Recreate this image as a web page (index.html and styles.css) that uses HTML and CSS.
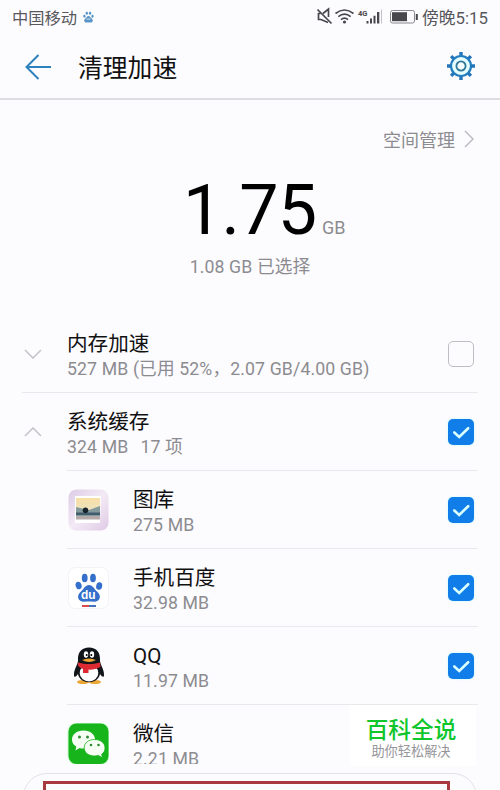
FILE: index.html
```html
<!DOCTYPE html>
<html lang="zh-CN">
<head>
<meta charset="utf-8">
<title>清理加速</title>
<link rel="stylesheet" href="styles.css">
</head>
<body>
<svg class="defs" width="0" height="0">
  <symbol id="check" viewBox="0 0 26 26"><path d="M6.3 13.500 11.200 18 20.200 9.200" fill="none" stroke="#d9ffff" stroke-width="2.600" stroke-linecap="round"/></symbol>
  <symbol id="paw" viewBox="0 0 28 30"><g fill="currentColor"><ellipse cx="9.700" cy="5" rx="2.900" ry="4.300"/><ellipse cx="18" cy="5" rx="2.900" ry="4.300"/><ellipse cx="3.600" cy="12.500" rx="3" ry="3.800" transform="rotate(-15 3.600 12.500)"/><ellipse cx="24.200" cy="13" rx="3" ry="3.800" transform="rotate(12 24.200 13)"/><path d="M14 12c4 0 5 4 8 6.500 5.500 4.500 2.500 10.500-3 10.300-3.500-.3-6.500-.3-10 0-5.500.2-8.500-5.800-3-10.300 3-2.500 4-6.500 8-6.500Z"/></g></symbol>
</svg>
<div class="screen">
  <div class="status">
    <span class="carrier">中国移动</span>
    <svg class="mini-paw" viewBox="0 0 28 32"><use href="#paw" width="28" height="30"/><path d="M9 20h10" stroke="#fff" stroke-width="2"/></svg>
    <svg class="signals" viewBox="0 0 104 20" fill="none" stroke="#48484c">
      <path d="M1.500 2.500 15.500 16.500M4.500 6.500H2.500v6H5l7 3M7 6.500l5.500-4.500v8" stroke-width="1.700"/>
      <path d="M19.500 6.500q9-7 18 0M22.300 9.700q6.200-5 12.400 0M25 12.700q3.500-3 7 0" stroke-width="1.600"/><circle cx="28.500" cy="15" r="1.600" fill="#48484c" stroke="none"/>
      <g fill="#48484c" stroke="none"><text x="42" y="8.500" class="net">4G</text><path d="M50.500 14h2v2.500h-2zM54 11.500h2v5h-2zM57.500 8.800h2v7.700h-2zM61 5h2.300v11.500H61z"/><path fill="#c4c4c8" d="M65 2.500h1v14h-1z"/></g>
      <rect x="74.500" y="3.500" width="24" height="12.500" rx="2" stroke="#88888c"/><path d="M76 5.200h15v9H76z" fill="#48484c" stroke="none"/><path d="M100.800 7v6" stroke-width="2"/>
    </svg>
    <span class="clock">傍晚5:15</span>
  </div>
  <header class="bar">
    <svg class="back" viewBox="0 0 28 26"><path d="M14.500 1 2.500 13l12 12M2.500 13H27" fill="none" stroke="#2d82bd" stroke-width="2"/></svg>
    <h1>清理加速</h1>
    <svg class="gear" viewBox="-15 -15 30 30"><circle r="10" fill="#e5ffff" stroke="#237dbe" stroke-width="2.200"/><circle r="4.600" fill="#f7ffff" stroke="#317797" stroke-width="1.800"/><g stroke="#2275b8" stroke-width="3.400"><path d="M0-10.500V-14M0 10.500V14M10.500 0H14M-10.500 0H-14M7.400-7.400l2.500-2.500M-7.400-7.400l-2.500-2.500M7.400 7.400l2.500 2.500M-7.400 7.400l-2.500 2.500"/></g></svg>
  </header>
  <section class="summary">
    <div class="manage"><span>空间管理</span><svg viewBox="0 0 10 18"><path d="m1 1 8 8-8 8" fill="none" stroke="#bcbcc0" stroke-width="1.500"/></svg></div>
    <div class="total"><strong>1.75</strong><span>GB</span></div>
    <p class="selected">1.08 GB 已选择</p>
  </section>
  <main class="list">
    <div class="row group">
      <svg class="chevron" viewBox="0 0 18 10"><path d="m1 1 8 8 8-8"/></svg>
      <div class="label"><h2>内存加速</h2><p>527 MB (已用 52%，2.07 GB/4.00 GB)</p></div>
      <span class="box"></span>
    </div>
    <div class="row group">
      <svg class="chevron" viewBox="0 0 18 10"><path d="m1 9 8-8 8 8"/></svg>
      <div class="label"><h2>系统缓存</h2><p class="count"><span>324 MB</span><span>17 项</span></p></div>
      <svg class="box on"><use href="#check"/></svg>
    </div>
    <div class="row app">
      <svg class="icon" viewBox="0 0 42 42"><defs><linearGradient id="lilac" x2="1" y2="1"><stop stop-color="#dccbe6"/><stop offset=".5" stop-color="#f3eaf5"/><stop offset="1" stop-color="#dfc9e5"/></linearGradient><linearGradient id="sky" x2="0" y2="1"><stop stop-color="#f8dfa6"/><stop offset="1" stop-color="#e6e4cf"/></linearGradient></defs><rect x="1.500" y=".5" width="40" height="41" rx="8" fill="url(#lilac)"/><path d="M8 7h26l-1 27H8z" fill="#fff"/><path d="M9 9h24v20H9z" fill="url(#sky)"/><path d="M9 18q8 2 13 3l11-4v11H9z" fill="#83999b"/><path d="M9 23.500h24v2.500H9z" fill="#405b6b"/><path d="M9 27h24v3.500H9z" fill="#b4aaaa"/><circle cx="18.500" cy="21.300" r="2.800" fill="#17232b"/></svg>
      <div class="label"><h2>图库</h2><p>275 MB</p></div>
      <svg class="box on"><use href="#check"/></svg>
    </div>
    <div class="row app">
      <svg class="icon" viewBox="0 0 42 42"><rect x="1.500" y=".5" width="40" height="41" rx="7" fill="#fff" stroke="#f3f2f5"/><use href="#paw" x="8" y="6" width="28" height="30" color="#346fcb"/><text x="14" y="32" class="du">du</text><path d="M15 39h7" stroke="#d94b49" stroke-width="2"/><path d="M22 39h7" stroke="#4674bb" stroke-width="2"/></svg>
      <div class="label"><h2>手机百度</h2><p>32.98 MB</p></div>
      <svg class="box on"><use href="#check"/></svg>
    </div>
    <div class="row app">
      <svg class="icon" viewBox="0 0 42 42"><ellipse cx="16" cy="37" rx="6" ry="2" fill="#eaa738"/><ellipse cx="28" cy="37" rx="6" ry="2" fill="#eaa738"/><path d="M22 2.500c7.500 0 11.500 5 11 13 0 4 4.500 9 4 15-.3 2.500-2.500 1-4-1.500-2 11-20 11-22 0-1.500 2.500-3.800 4-4 1.500-.5-6 4-11 4-15-.5-8 3.500-13 11-13Z" fill="#111519"/><ellipse cx="22" cy="28" rx="9.300" ry="8.500" fill="#fff"/><ellipse cx="19" cy="9.500" rx="2.200" ry="3.200" fill="#fff"/><ellipse cx="25" cy="9.500" rx="2.200" ry="3.200" fill="#fff"/><circle cx="19.700" cy="10" r="1"/><circle cx="24.300" cy="10" r="1"/><path d="M15 15q7-3 14 0-7 4-14 0Z" fill="#efa334"/><path d="M11 17.500q11 3.500 22 0l.5 4.500q-7 3.500-12 2.500v3.500H16v-4Q10 22 11 17.500Z" fill="#dd2931"/></svg>
      <div class="label"><h2>QQ</h2><p>11.97 MB</p></div>
      <svg class="box on"><use href="#check"/></svg>
    </div>
    <div class="row app">
      <svg class="icon" viewBox="0 0 42 42"><rect x="1.500" y=".5" width="40" height="40.500" rx="8" fill="#17b41c" class="glow"/><path d="M16.500 7.500C9.500 7.500 5 11.700 5 16.500c0 3.200 1.600 5.600 4.300 7l-.8 4 4-2.600c4 1 6 .3 8-.3 5-1.500 7.500-4.500 7.500-8.100 0-5-4.500-9-11.500-9Z" fill="#f7fff5"/><path d="M27.500 16.500c-6 0-10.300 3.500-10.300 8.300s4.300 8.200 10.300 8.200l4-.5 4 2.300-.9-3.500c2.400-1.500 3.400-3.700 3.400-6.500 0-4.800-4.500-8.300-10.500-8.300Z" fill="#f7fff5" stroke="#17b41c" stroke-width=".8"/><g fill="#318a35"><circle cx="12.500" cy="14" r="1.500"/><circle cx="20.500" cy="14" r="1.500"/><circle cx="24" cy="22" r="1.300"/><circle cx="31.500" cy="22" r="1.300"/></g></svg>
      <div class="label"><h2>微信</h2><p>2.21 MB</p></div>
    </div>
  </main>
  <footer class="action"><div class="highlight"></div></footer>
  <aside class="watermark"><b>百科全说</b><span>助你轻松解决</span></aside>
</div>
</body>
</html>
```
FILE: styles.css
```css
* { box-sizing: border-box; }
body { margin: 0; background: #fcfbfe; color: #111; font-family: Roboto, "Noto Sans CJK SC", sans-serif; }
h1, h2, p { margin: 0; font-weight: 400; }
svg { display: block; flex: none; }
.defs { position: absolute; }
.screen { position: relative; width: 500px; height: 790px; overflow: hidden; }
.status { display: flex; align-items: center; height: 34px; padding: 0 10px 0 12px; color: #58585c; font-size: 16.3px; white-space: nowrap; }
.status span { margin-top: -1px; }
.carrier { width: 65px; }
.mini-paw { width: 11px; height: 13px; margin-left: 6px; color: #5994c8; }
.signals { width: 104px; height: 20px; margin-left: auto; }
.net { font: 700 7.500px Roboto, sans-serif; }
.clock { width: 68px; margin-left: 2px; font-size: 16.8px; }
.bar { display: flex; align-items: center; height: 66px; padding: 0 24px; border-bottom: 2px solid #dddce0; }
.back { width: 28px; height: 26px; margin-top: 1px; }
h1 { margin: 6px 0 0 26px; font-size: 24.8px; line-height: 34px; }
.gear { width: 30px; height: 30px; margin-left: auto; }
.summary { height: 215px; padding-top: 27px; color: #8c8c90; }
.manage { display: flex; align-items: center; justify-content: flex-end; height: 24px; padding-right: 26px; font-size: 18px; }
.manage svg { width: 10px; height: 18px; margin-left: 9px; }
.total { display: flex; align-items: baseline; height: 99px; padding-left: 183px; line-height: 119px; }
.total strong { width: 136px; color: #000; font-size: 70px; font-weight: 400; letter-spacing: -.8px; }
.total span { margin-left: 3px; font-size: 18px; }
.selected { margin-top: 5px; font-size: 17.700px; line-height: 24px; text-align: center; letter-spacing: .1px; }
.list { height: 449px; overflow: hidden; }
.row { display: flex; align-items: center; height: 78px; margin-right: 22px; padding-right: 4px; border-bottom: 1px solid #e9e8ec; }
.group { margin-left: 22px; }
.group + .group, .app { margin-left: 67px; }
.group + .group .chevron { margin-left: -43px; }
.chevron { width: 18px; height: 10px; margin: 0 25px 0 2px; fill: none; stroke: #c4c4c9; stroke-width: 1.600; }
.icon { width: 42px; height: 42px; margin-right: 24px; }
.glow { filter: drop-shadow(0 0 1px #8bff92); }
.label { height: 50px; padding-top: 2px; white-space: nowrap; }
h2 { font-size: 20.600px; line-height: 26px; }
.label p { color: #8c8c90; font-size: 17.700px; line-height: 25px; letter-spacing: .12px; }
.count { display: flex; gap: 12px; }
.box { width: 26px; height: 26px; margin-left: auto; border: 1px solid #bdbdc2; border-radius: 5px; }
.box.on { border: 0; background: #117de9; box-shadow: 0 0 2px #afffff; }
.du { fill: #fff; font: 700 12px "Liberation Sans", sans-serif; }
.action { width: 454px; height: 40px; margin: 9px 0 0 23px; padding: 7px 26px 0 19px; border: 1px solid #e4e2e7; border-radius: 24px 24px 0 0; }
.highlight { height: 40px; border: 3px solid #a93940; }
.watermark { position: absolute; left: 350px; top: 705px; width: 126px; height: 61px; display: flex; flex-direction: column; align-items: center; padding-top: 12px; background: #fff; }
.watermark b { color: #0fc62d; font-size: 22.700px; font-weight: 500; line-height: 28px; margin-right: 4px; }
.watermark span { color: #96969a; font-size: 13.200px; line-height: 14px; margin-right: 4px; }
```
